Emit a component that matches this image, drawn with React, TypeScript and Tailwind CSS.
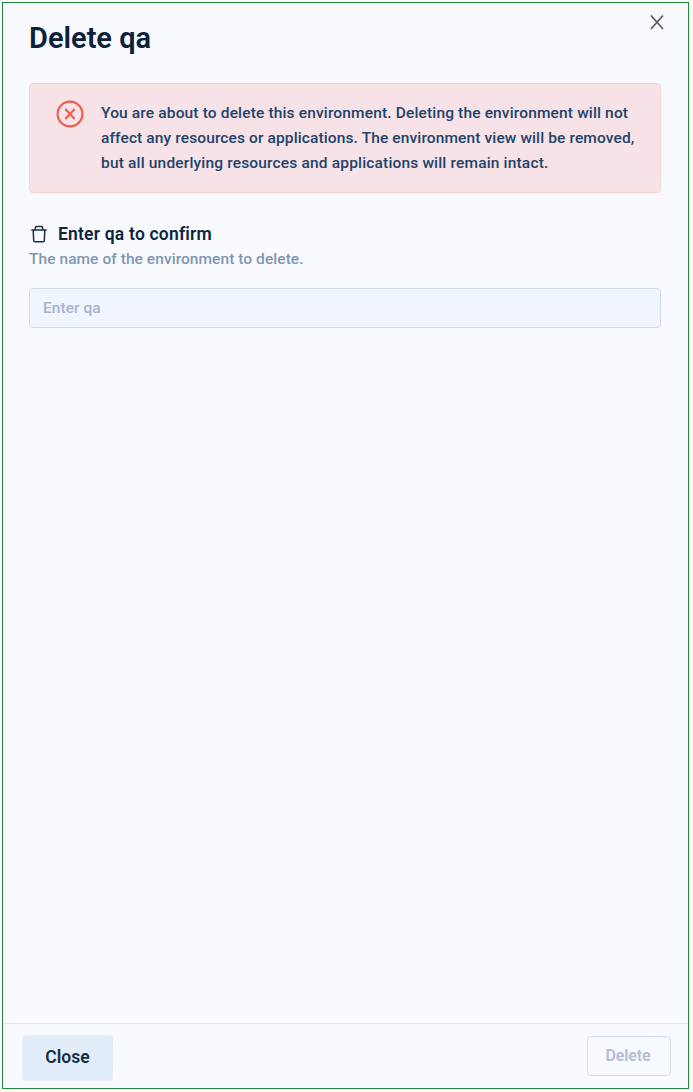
import React from "react";

function CloseIcon() {
  return (
    <svg width="14" height="15" viewBox="0 0 14 15" fill="none" stroke="#5c5c5e" strokeWidth="1.7">
      <path d="M1 .5 13 14M13 .5 1 14" />
    </svg>
  );
}

function ErrorIcon() {
  return (
    <svg className="shrink-0" width="28" height="28" viewBox="0 0 28 28" fill="none" stroke="#f2594b">
      <circle cx="14" cy="14" r="12.4" strokeWidth="2.1" />
      <path d="M9.3 9 18.7 19M18.7 9 9.3 19" strokeWidth="2" />
    </svg>
  );
}

function TrashIcon() {
  return (
    <svg className="-mt-0.5" width="16" height="18" viewBox="0 0 16 18" fill="none" stroke="#1c2f45" strokeWidth="1.5" strokeLinejoin="round">
      <path d="M.3 5h15.4M4 4.8l.7-2.9q.1-.4.6-.4h5.4q.5 0 .6.4l.7 2.9M2.2 5l.5 10.7q.1 1 1.1 1h8.4q1 0 1.1-1L13.8 5" />
    </svg>
  );
}

export default function App() {
  return (
    <div className="h-[1092px] w-[693px] bg-white pl-[2px] pt-[2px] font-['Roboto',sans-serif]">
      <section className="flex h-[1087px] w-[687px] flex-col border border-[#20883b] bg-[#f8faff]">
        <header className="flex h-20 items-start justify-between pl-[26px] pr-6">
          <h1 className="mt-[17px] whitespace-nowrap text-[29px] font-semibold leading-9 text-[#0a2138]">
            Delete qa
          </h1>
          <button aria-label="Close panel" className="mt-[12px]">
            <CloseIcon />
          </button>
        </header>

        <main className="flex-1 pl-[26px] pr-[27px]">
          <div className="flex h-[110px] gap-[17px] rounded-[4px] border border-[#fbd3cc] bg-[#f6e2e7] pl-[26px] pt-4">
            <ErrorIcon />
            <p className="whitespace-nowrap pt-px text-[15.5px] font-medium leading-[25px] text-[#234269]">
              <span className="block tracking-[0.15px]">You are about to delete this environment. Deleting the environment will not</span>
              <span className="block tracking-[0.12px]">affect any resources or applications. The environment view will be removed,</span>
              <span className="block tracking-[0.17px]">but all underlying resources and applications will remain intact.</span>
            </p>
          </div>

          <label htmlFor="confirm" className="mt-[30px] flex h-6 items-center gap-[11px] pl-[2px] text-[17.5px] font-semibold tracking-[0.2px] text-[#0d253d]">
            <TrashIcon />
            <span className="-mt-0.5">Enter qa to confirm</span>
          </label>
          <p className="text-[15.5px] font-medium leading-6 tracking-[0.06px] text-[#8097b2]">
            The name of the environment to delete.
          </p>
          <input
            id="confirm"
            placeholder="Enter qa"
            className="mt-[17px] block h-10 w-full rounded-[4px] border border-[#d1dbea] bg-[#f0f5ff] px-[13px] pb-px text-[15.5px] font-medium tracking-[0.05px] text-[#0d253d] placeholder:text-[#a7b4ce]"
          />
        </main>

        <footer className="flex h-[65px] items-start justify-between border-t border-[#e3e9f7] pl-[19px] pr-[17px]">
          <button className="mt-[11px] h-[46px] w-[91px] rounded-[4px] bg-[#e2edf9] pb-[2px] text-[17.5px] font-semibold text-[#152e46]">
            Close
          </button>
          <button disabled className="mt-[12px] h-10 w-[84px] rounded-[4px] border border-[#d6dfec] bg-[#f8faff] pb-px pr-[2px] text-[16px] font-semibold tracking-[-0.15px] text-[#b2bfd3]">
            Delete
          </button>
        </footer>
      </section>
    </div>
  );
}
